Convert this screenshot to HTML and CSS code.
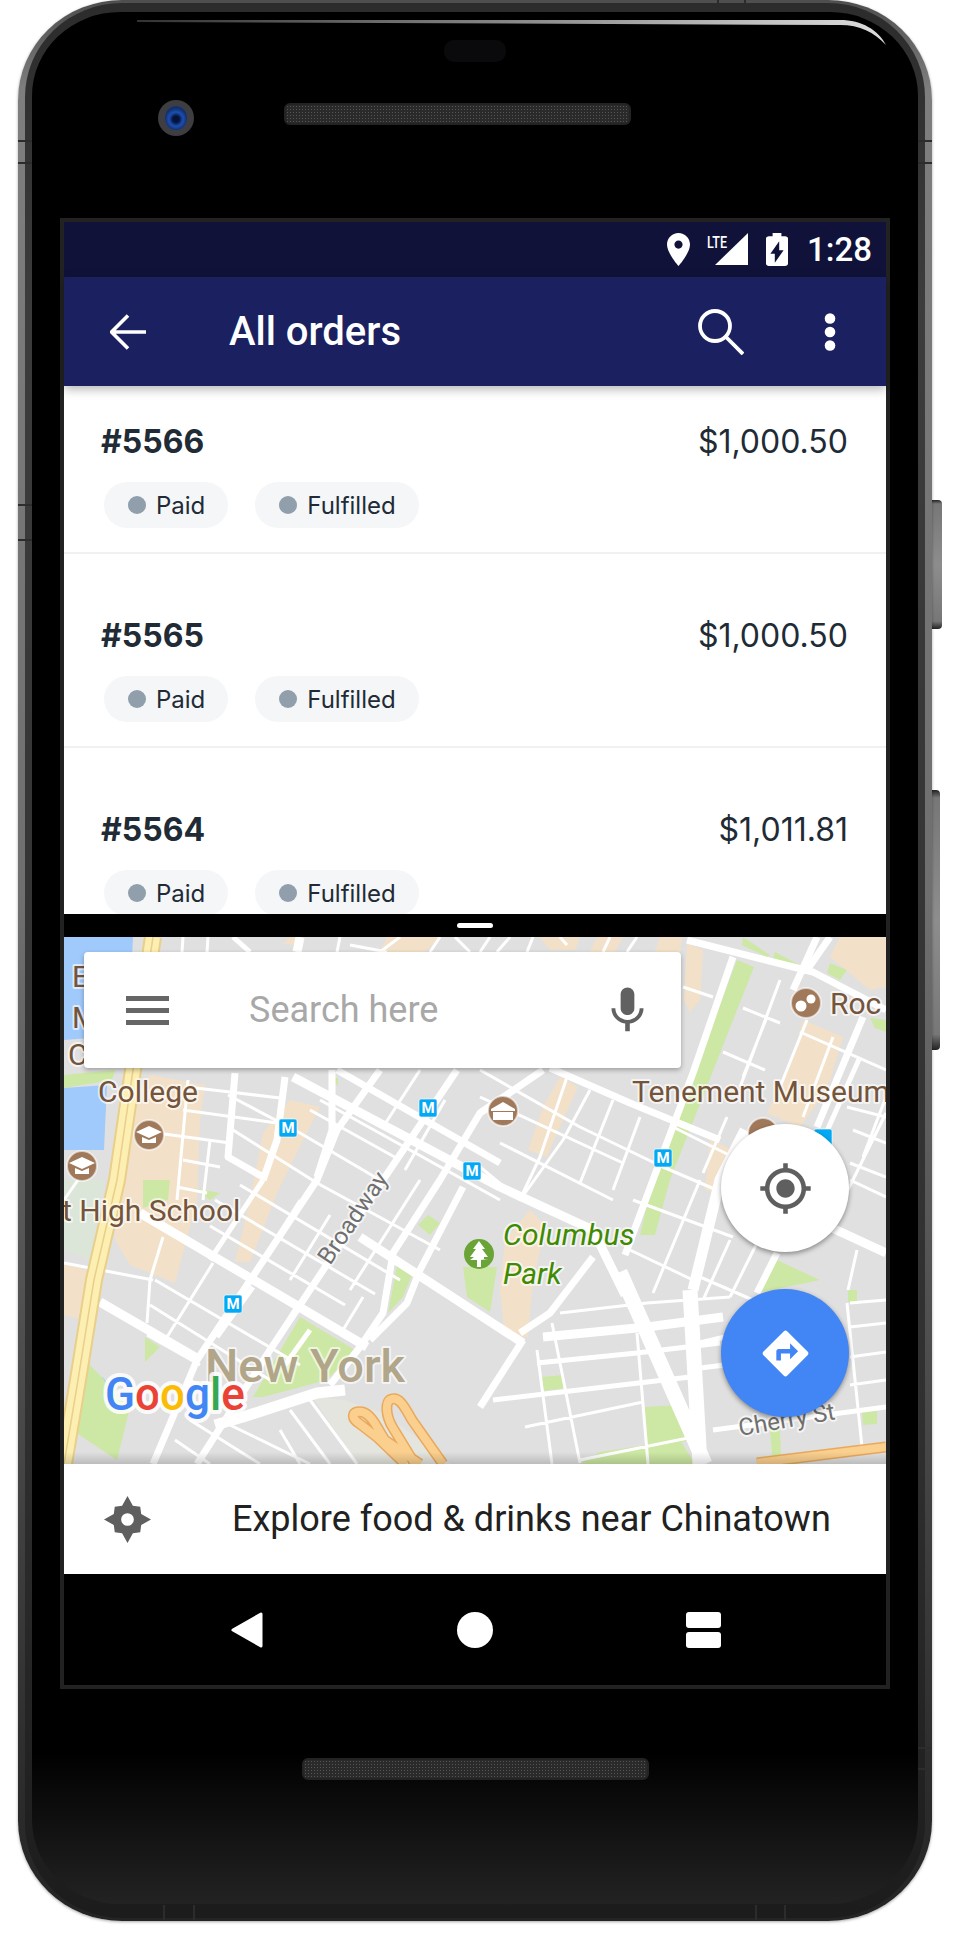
FILE: index.html
```html
<!DOCTYPE html>
<html lang="en">
<head>
<meta charset="utf-8">
<title>All orders</title>
<link rel="stylesheet" href="styles.css">
</head>
<body>
<div class="device">
  <div class="btn btn-power"></div>
  <div class="btn btn-volume"></div>
  <div class="frame">
    <div class="rim">
      <div class="face">
        <div class="earpiece"></div>
        <div class="top-row">
          <div class="camera"><div class="lens"></div></div>
          <div class="speaker"></div>
        </div>
        <div class="screen">
          <div class="status">
            <svg class="st-pin" viewBox="5 2 14 20" preserveAspectRatio="none"><path fill="#fff" d="M12 2C8.13 2 5 5.13 5 9c0 5.25 7 13 7 13s7-7.75 7-13c0-3.87-3.13-7-7-7zm0 9.5c-1.38 0-2.5-1.12-2.5-2.5s1.12-2.5 2.5-2.5 2.5 1.12 2.5 2.5-1.12 2.5-2.5 2.5z"/></svg>
            <svg class="st-signal" viewBox="0 0 41 33"><text class="lte" x="0" y="15" textLength="20" lengthAdjust="spacingAndGlyphs">LTE</text><path fill="#fff" d="M41 0V32H8Z"/></svg>
            <svg class="st-batt" viewBox="7 2 10 20" preserveAspectRatio="none"><path fill="#fff" d="M15.67 4H14V2h-4v2H8.33C7.6 4 7 4.6 7 5.33v15.33C7 21.4 7.6 22 8.33 22h7.33c.74 0 1.34-.6 1.34-1.33V5.33C17 4.6 16.4 4 15.67 4zM11 20v-5.5H9L13 7v5.5h2L11 20z"/></svg>
            <span class="time">1:28</span>
          </div>
          <header class="appbar">
            <svg class="ab-back" viewBox="0 0 36 36"><path d="M36 18H2M18 1.500 1.500 18 18 34.500" fill="none" stroke="#fff" stroke-width="3.600"/></svg>
            <h1 class="title">All orders</h1>
            <svg class="ab-search" viewBox="0 0 46 46"><circle cx="17" cy="17" r="15" fill="none" stroke="#fff" stroke-width="3.800"/><path d="M28 28 45 45" stroke="#fff" stroke-width="3.800"/></svg>
            <svg class="ab-more" viewBox="0 0 12 38"><circle cx="6" cy="5.500" r="5.300" fill="#fff"/><circle cx="6" cy="19" r="5.300" fill="#fff"/><circle cx="6" cy="32.500" r="5.300" fill="#fff"/></svg>
          </header>
          <div class="orders">
            <div class="orders-scroll">
              <div class="order">
                <div class="order-top"><span class="order-id">#5566</span><span class="order-price">$1,000.50</span></div>
                <div class="chips"><span class="chip"><i class="dot"></i>Paid</span><span class="chip"><i class="dot"></i>Fulfilled</span></div>
              </div>
              <div class="order">
                <div class="order-top"><span class="order-id">#5565</span><span class="order-price">$1,000.50</span></div>
                <div class="chips"><span class="chip"><i class="dot"></i>Paid</span><span class="chip"><i class="dot"></i>Fulfilled</span></div>
              </div>
              <div class="order">
                <div class="order-top"><span class="order-id">#5564</span><span class="order-price">$1,011.81</span></div>
                <div class="chips"><span class="chip"><i class="dot"></i>Paid</span><span class="chip"><i class="dot"></i>Fulfilled</span></div>
              </div>
            </div>
          </div>
          <div class="divider"><span class="handle"></span></div>
          <div class="map">
            <svg class="map-art" viewBox="64 937 822 527" width="822" height="527">
              <rect x="64" y="937" width="822" height="527" fill="#e0e0e0"/>
              <g fill="#a0c9fc">
                <path d="M64 937H133L128 1035 64 1040Z"/>
                <path d="M64 1088 107 1085 104 1150H64Z"/>
                <path d="M102 1377 112 1387 102 1397 92 1387Z"/>
                <path d="M105 1417 116 1428 105 1439 94 1428Z"/>
              </g>
              <g fill="#f2e1c8">
                <path d="M150 1075 205 1085 200 1120 197 1200 175 1283 130 1265 115 1240 118 1180 130 1100Z"/>
                <path d="M290 1100 320 1107 303 1140 277 1193 250 1262 235 1262 250 1200 263 1133Z"/>
                <path d="M560 1077 578 1087 557 1133 547 1157 528 1150 543 1107Z"/>
                <path d="M540 937H580L575 950H550Z"/>
                <path d="M597 937H623L615 952H590Z"/>
                <path d="M660 937H682L680 952H655Z"/>
                <path d="M687 943 703 950 700 1000 690 1012 684 1000Z"/>
                <path d="M803 1020 843 1037 827 1090 800 1127 767 1113 790 1067Z"/>
                <path d="M840 937H886V987L870 990 830 957Z"/>
                <path d="M530 1210 545 1225 532 1290 528 1337 505 1335 500 1290 505 1240Z"/>
                <path d="M710 1140 733 1150 720 1193 705 1190Z"/>
                <path d="M387 937H440L425 952H380Z"/>
                <path d="M64 1262 92 1272 85 1320 64 1315Z"/>
                <path d="M290 937H300L298 945 283 944Z"/>
              </g>
              <path fill="#dbe6d8" d="M64 1180H105L90 1260 64 1250Z"/>
              <path fill="#e5e5e0" d="M313 1397 343 1400 383 1413 443 1457 450 1464H357Z"/>
              <g fill="#cde8a4">
                <path d="M64 1075 115 1070 112 1080 64 1088Z"/>
                <path d="M737 960 754 967 670 1180 655 1235 640 1235 653 1180Z"/>
                <path d="M743 937 770 955 767 957 742 945Z"/>
                <path d="M775 952 803 967 802 970 773 958Z"/>
                <path d="M817 971 847 987 843 988 815 975Z"/>
                <path d="M830 963 847 970 840 980 827 973Z"/>
                <path d="M870 1018 886 1020V1032L875 1028Z"/>
                <path d="M300 1317 355 1350 327 1380 263 1397 253 1397Z"/>
                <path d="M397 1265 412 1275 403 1297 388 1313Z"/>
                <path d="M428 1215 440 1223 430 1235 418 1225Z"/>
                <path d="M463 1267H497L490 1312 467 1297Z"/>
                <path d="M193 1188 220 1193 210 1200Z"/>
                <path d="M143 1180H170L168 1200 143 1208Z"/>
                <path d="M145 1337 160 1347 145 1362Z"/>
                <path d="M87 1362 130 1407 117 1460 72 1430Z"/>
                <path d="M645 1407 680 1405 695 1440 645 1447Z"/>
                <path d="M580 1464H695L680 1440 600 1452Z"/>
                <path d="M542 1377 563 1375 566 1388 543 1391Z"/>
                <path d="M770 1430H780L781 1456H772Z"/>
                <path d="M862 1410 877 1408 877 1424 863 1425Z"/>
                <path d="M848 1290 857 1290 857 1302 848 1302Z"/>
                <path d="M767 1280 777 1260 820 1280 757 1293Z"/>
                <path d="M330 1078 338 1078 338 1086Z"/>
              </g>
              <g fill="none" stroke="#fff" stroke-linejoin="round">
                <path stroke-width="3" d="M183 937 182 952M208 937 207 952M340 937 337 952M350 945 387 952M400 937 380 952M440 937 430 952M455 937 470 952M490 937 480 952M510 937 497 952M533 937 527 952M560 937 567 945M610 937 603 952M637 937 627 952M187 1087 230 1092 280 1098M183 1110 277 1123M157 1133 230 1143M183 1160 220 1167M177 1187 207 1193M188 1080 177 1200 M210 1140 203 1200M233 1130 317 1183 440 1250M228 1095 300 1133 380 1180M310 1110 400 1160M340 1100 430 1150M210 1226 345 1305M215 1200 375 1294M240 1185 400 1280M64 1263 153 1280M155 1280 300 1365M150 1305 270 1380M147 1335 200 1365M190 1380 240 1410M230 1425 310 1464M190 1420 260 1464M175 1440 210 1464M310 1400 357 1464M290 1410 330 1464M280 1430 300 1464M330 1215 290 1280M300 1200 250 1280M163 1237 150 1280 147 1323M213 1263 167 1337M420 1180 350 1290M363 1297 343 1330M480 1070 580 1127 663 1167 740 1200M480 1097 623 1163M500 1143 613 1200M480 1167 520 1200M320 1100 500 1200M590 1090 563 1140 520 1200M613 1100 580 1183M640 1117 613 1190M567 1077 540 1157 523 1193M420 1070 383 1127M445 1100 405 1170M683 987 713 997M743 1008 780 1023M723 1052 765 1070M800 1032 886 1070M673 1127 733 1157M780 980 753 1053 740 1087M767 1017 743 1077M833 1037 803 1117M807 1020 780 1087M886 1097 863 1157M886 1113 843 1200M727 1117 703 1173M847 1107 886 1117M853 1130 886 1143M850 1163 886 1177M850 1180 886 1197M633 1200 733 1237M700 1277 753 1300M630 1250 693 1280M730 1240 703 1300M757 1243 730 1297M700 1180 653 1293M552 1323 580 1463M537 1350 552 1464M637 1333 648 1464M560 1313 647 1303 730 1297M525 1427 643 1402M580 1460 693 1437M850 1303 886 1300M850 1327 886 1323M850 1357 886 1352M850 1385 886 1380M847 1303 862 1447M857 1250 848 1290M64 1200 78 1180"/>
                <path stroke-width="5" d="M860 1057 823 1140M493 1400 690 1377M713 1430 886 1407M700 1343 725 1337M700 1368 725 1365M233 937 250 952M263 1180 210 1260M253 1287 217 1337M297 1307 270 1350M537 1363 637 1353 720 1343M310 1330 285 1365"/>
                <path stroke-width="7" d="M235 1073 228 1157 263 1177M285 1077 277 1140 263 1180M332 1070 332 1130 317 1177M380 1070 337 1130 317 1180 197 1360 153 1464M457 1070 383 1180 270 1350 197 1464M543 1070 480 1113 440 1180 393 1253 383 1313 360 1347 330 1385M463 1187 420 1270 407 1303 370 1340M337 1070 500 1163M550 1068 630 1103 720 1140M687 940 813 972 886 1010M817 937 793 990M830 937 807 970M863 1017 817 1127M733 957 693 1073 653 1180 625 1255M777 1253 757 1293M593 1257 550 1313 520 1333M523 1340 480 1407"/>
                <path stroke-width="9" d="M293 1077 500 1187 593 1230 625 1295M360 1237 523 1343M100 1302 200 1360M830 1227 886 1253M543 1337 647 1327 723 1317M140 1213 367 1347M300 937 297 952"/>
                <path stroke-width="11" d="M215 1425 243 1417 317 1393 345 1390M745 1130 720 1180 693 1290"/>
                <path stroke-width="15" d="M620 1272 705 1464M690 1290 700 1464"/>
              </g>
              <g fill="none">
                <path stroke="#e8cf8a" stroke-width="18" d="M153 937 133 1070 117 1180 94 1280 78 1380 64 1464"/>
                <path stroke="#fdeeb2" stroke-width="14" d="M153 937 133 1070 117 1180 94 1280 78 1380 64 1464"/>
                <path stroke="#e8cf8a" stroke-width="1.500" d="M153 937 133 1070 117 1180 94 1280 78 1380 64 1464"/>
                <path stroke="#e8a95c" stroke-width="11" d="M405 1464 378 1438 360 1424C350 1418 352 1410 362 1412 372 1414 378 1430 385 1440L420 1464M415 1464 393 1428C385 1415 385 1400 392 1399 400 1397 405 1408 412 1420L443 1464M757 1463 886 1447"/>
                <path stroke="#fbd08f" stroke-width="8" d="M405 1464 378 1438 360 1424C350 1418 352 1410 362 1412 372 1414 378 1430 385 1440L420 1464M415 1464 393 1428C385 1415 385 1400 392 1399 400 1397 405 1408 412 1420L443 1464M757 1463 886 1447"/>
              </g>
              <g class="poi-brown">
                <circle cx="149" cy="1135" r="15"/><circle cx="82" cy="1166" r="15"/><circle cx="503" cy="1111" r="15"/><circle cx="806" cy="1003" r="15"/><circle cx="763" cy="1133" r="15"/>
              </g>
              <g fill="#fff">
                <path d="M136 1132 149 1126 162 1132 149 1138ZM142 1137 149 1140 156 1137V1143H142Z"/>
                <path d="M69 1163 82 1157 95 1163 82 1169ZM75 1168 82 1171 89 1168V1174H75Z"/>
                <path d="M491 1109 503 1102 515 1109V1111H491ZM493 1112H513V1120H493Z"/>
                <circle cx="801" cy="1006" r="5.500"/><circle cx="811" cy="999" r="4.500"/>
              </g>
              <circle cx="479" cy="1254" r="15" fill="#6aa436"/>
              <path fill="#fff" d="M479 1241 485 1249H482L488 1257H484V1259H488L481 1260V1267H477V1260H470L474 1257H470L476 1249H473Z"/>
              <g class="metro">
                <rect x="279" y="1119" width="18" height="18" rx="2"/><rect x="419" y="1099" width="18" height="18" rx="2"/><rect x="463" y="1162" width="18" height="18" rx="2"/><rect x="654" y="1149" width="18" height="18" rx="2"/><rect x="224" y="1295" width="18" height="18" rx="2"/><rect x="814" y="1129" width="18" height="18" rx="2"/>
              </g>
              <g class="metro-label">
                <text x="288" y="1133">M</text><text x="428" y="1113">M</text><text x="472" y="1176">M</text><text x="663" y="1163">M</text><text x="233" y="1309">M</text>
              </g>
              <g class="lbl-brown">
                <text x="72" y="987">E</text><text x="72" y="1028">M</text><text x="68" y="1065">C</text>
                <text x="98" y="1102">College</text>
                <text x="62" y="1221">t High School</text>
                <text x="632" y="1102">Tenement Museum</text>
                <text x="830" y="1014">Roc</text>
              </g>
              <g class="lbl-green">
                <text x="503" y="1245">Columbus</text>
                <text x="503" y="1284">Park</text>
              </g>
              <text class="lbl-city" x="205" y="1382">New York</text>
              <g class="lbl-street">
                <text transform="translate(330 1266) rotate(-56)">Broadway</text>
                <text transform="translate(740 1436) rotate(-10)">Cherry St</text>
              </g>
              <text class="google" x="105" y="1410" textLength="140" lengthAdjust="spacingAndGlyphs"><tspan fill="#4285f4">G</tspan><tspan fill="#ea4335">o</tspan><tspan fill="#fbbc05">o</tspan><tspan fill="#4285f4">g</tspan><tspan fill="#34a853">l</tspan><tspan fill="#ea4335">e</tspan></text>
            </svg>
            <div class="map-fade"></div>
            <div class="searchbar">
              <svg class="sb-menu" viewBox="0 0 43 29"><path fill="#666" d="M0 0H43V5H0ZM0 12H43V17H0ZM0 24H43V29H0Z"/></svg>
              <span class="sb-text">Search here</span>
              <svg class="sb-mic" viewBox="0 0 24 24"><path fill="#616161" d="M12 14c1.66 0 2.99-1.34 2.99-3L15 5c0-1.660-1.340-3-3-3S9 3.340 9 5v6c0 1.660 1.340 3 3 3zm5.300-3c0 3-2.540 5.100-5.300 5.100S6.700 14 6.700 11H5c0 3.410 2.720 6.230 6 6.720V21h2v-3.280c3.280-.48 6-3.300 6-6.720h-1.700z"/></svg>
            </div>
            <div class="fab fab-locate">
              <svg class="fab-icon" viewBox="0 0 24 24"><path fill="#5f5f5f" d="M12 8c-2.210 0-4 1.790-4 4s1.790 4 4 4 4-1.790 4-4-1.790-4-4-4zm8.940 3c-.46-4.170-3.770-7.480-7.940-7.940V1h-2v2.060C6.830 3.520 3.520 6.830 3.060 11H1v2h2.060c.46 4.170 3.770 7.480 7.940 7.940V23h2v-2.060c4.170-.46 7.480-3.770 7.940-7.940H23v-2h-2.060zM12 19c-3.870 0-7-3.130-7-7s3.130-7 7-7 7 3.130 7 7-3.130 7-7 7z"/></svg>
            </div>
            <div class="fab fab-directions">
              <svg class="fab-icon" viewBox="0 0 24 24"><path fill="#fff" d="M21.710 11.290l-9-9c-.39-.39-1.020-.39-1.410 0l-9 9c-.39.39-.39 1.020 0 1.410l9 9c.39.39 1.020.39 1.410 0l9-9c.39-.38.39-1.010 0-1.410zM14 14.500V12h-4v3H8v-4c0-.55.45-1 1-1h5V7.500l3.500 3.500-3.500 3.500z"/></svg>
            </div>
          </div>
          <div class="sheet">
            <svg class="sh-icon" viewBox="0 0 48 48"><path fill="#5f5f5f" fill-rule="evenodd" d="M24 0 29.500 10 37 11 38 18.500 48 24 38 29.500 37 37 29.500 38 24 48 18.500 38 11 37 10 29.500 0 24 10 18.500 11 11 18.500 10ZM24 17.500A6.500 6.500 0 1 0 24 30.500 6.500 6.500 0 1 0 24 17.500Z"/></svg>
            <span class="sh-text">Explore food &amp; drinks near Chinatown</span>
          </div>
          <nav class="navbar">
            <svg class="nv-back" viewBox="0 0 32 36"><path fill="#fff" stroke="#fff" stroke-width="3" stroke-linejoin="round" d="M30 2V34L2 18Z"/></svg>
            <span class="nv-home"></span>
            <span class="nv-recent"><i></i><i></i></span>
          </nav>
        </div>
        <div class="speaker speaker-bottom"></div>
      </div>
    </div>
  </div>
  <svg class="decor" viewBox="0 0 958 1936" width="958" height="1936">
    <defs>
      <linearGradient id="glint" x1="0" x2="1" y1="0" y2="0">
        <stop offset="0" stop-color="#333"/><stop offset=".6" stop-color="#999"/><stop offset="1" stop-color="#ddd"/>
      </linearGradient>
    </defs>
    <path fill="url(#glint)" d="M137 20H840C862 20 878 30 886 45 874 32 860 25 840 25L137 22Z"/>
    <g stroke="#2c2c2c" stroke-width="2">
      <path d="M918 141H932M918 163H932M18 141H32M18 163H32M718 0V10M745 0V10M164 1905V1920M194 1905V1920M756 1905V1920M785 1905V1920M918 1748H932M918 1769H932M18 505H32M18 540H32"/>
    </g>
  </svg>
</div>
</body>
</html>
```

FILE: styles.css
```css
* { box-sizing: border-box; }
html, body { margin: 0; padding: 0; background: #fff; }
body { font-family: Roboto, "Liberation Sans", sans-serif; height: 1936px; overflow: hidden; }

.device { position: relative; width: 914px; height: 1921px; margin-left: 18px; }
.btn { position: absolute; border-radius: 0 4px 4px 0; background: linear-gradient(to bottom, #222 0, #777 3%, #8d8d8d 50%, #777 94%, #222 100%); }
.btn-power { left: 914px; top: 500px; width: 10px; height: 129px; }
.btn-volume { left: 914px; top: 790px; width: 8px; height: 260px; }

.frame { position: relative; height: 100%; padding: 3px 7px 3px 7px; border-radius: 104px / 100px;
  background: linear-gradient(to bottom, #4e4e4e 0, #7e7e7e 90px, #6f6f6f 900px, #4a4a4a 1400px, #2e2e2e 1750px, #242424 100%);
  box-shadow: 0 1px 3px rgba(0,0,0,.35); }
.rim { height: 100%; padding: 9px 7px 14px 7px; border-radius: 97px / 94px;
  background: linear-gradient(to bottom, #2c2c2c 0, #3c3c3c 300px, #303030 1400px, #1c1c1c 100%); }
.face { position: relative; height: 100%; display: flex; flex-direction: column; align-items: center; border-radius: 88px / 84px;
  background: linear-gradient(to bottom, #000 0, #000 1740px, #101010 1810px, #222 1890px); }

.earpiece { position: absolute; top: 28px; left: 412px; width: 62px; height: 22px; border-radius: 10px; background: #0a0a0d; }
.top-row { position: relative; width: 100%; height: 206px; padding-top: 88px; display: flex; }
.camera { width: 36px; height: 36px; margin-left: 126px; border-radius: 50%; background: #3e3e42; display: flex; align-items: center; justify-content: center; }
.lens { width: 22px; height: 24px; border-radius: 50%; background: radial-gradient(circle at 50% 55%, #05123a 0 3px, #1c4fb0 7px, #123070 11px); }
.speaker { width: 347px; height: 22px; margin-left: 90px; border-radius: 6px; border: 2px solid #232323;
  background: #2a2a2a radial-gradient(#555 0.7px, transparent 0.9px) 0 0 / 3px 3px; }
.top-row .speaker { margin-top: 3px; }
.speaker-bottom { margin: 69px 0 0 0; }

.screen { width: 830px; height: 1471px; border: 4px solid #222; background: #000; display: flex; flex-direction: column; flex: none; }

.status { height: 55px; background: #101239; display: flex; align-items: center; justify-content: flex-end; padding-right: 19px; }
.st-pin { width: 23px; height: 33px; margin-right: 17px; }
.st-signal { width: 41px; height: 33px; margin-right: 18px; }
.st-batt { width: 22px; height: 33px; margin-right: 19px; }
.lte { font-family: Roboto, sans-serif; font-weight: 500; font-size: 17px; fill: #fff; }
.time { color: #fff; font-size: 33px; font-weight: 500; width: 60px; text-align: right; line-height: 33px; }

.appbar { height: 109px; background: #1b2160; display: flex; align-items: center; padding-left: 46px; position: relative; z-index: 2; box-shadow: 0 3px 10px rgba(0,0,0,.3); }
.ab-back { width: 36px; height: 36px; margin-right: 83px; }
.title { margin: 0; color: #fff; font-size: 40px; font-weight: 500; flex: 1; line-height: 48px; }
.ab-search { width: 46px; height: 46px; margin-right: 80px; }
.ab-more { width: 12px; height: 38px; margin-right: 50px; }

.orders { height: 528px; overflow: hidden; background: #fff; }
.orders-scroll { margin-top: -26px; }
.order { height: 194px; padding: 60px 38px 24px 37px; border-bottom: 2px solid #f0f1f3; }
.order-top { display: flex; justify-content: space-between; align-items: center; height: 42px; color: #212b36; }
.order-id { font-family: Inter, sans-serif; font-weight: 700; font-size: 32px; }
.order-price { font-family: Inter, sans-serif; font-size: 32px; }
.chips { display: flex; gap: 27px; margin: 20px 0 0 3px; }
.chip { height: 46px; border-radius: 23px; background: #f4f6f8; display: flex; align-items: center; padding: 0 23px 0 24px; color: #212b36; font-family: Inter, sans-serif; font-size: 24px; }
.dot { width: 18px; height: 18px; border-radius: 50%; background: #919eab; margin-right: 10px; }

.divider { height: 23px; background: #000; display: flex; align-items: center; justify-content: center; }
.handle { width: 36px; height: 5px; border-radius: 3px; background: #fff; }

.map { position: relative; height: 527px; overflow: hidden; background: #e0e0e0; }
.map-art { display: block; }
.map-fade { position: absolute; left: 0; right: 0; bottom: 0; height: 12px; background: linear-gradient(to bottom, rgba(0,0,0,0), rgba(0,0,0,.16)); }

.poi-brown { fill: #a0795b; stroke: #fff; stroke-opacity: .6; stroke-width: 2; }
.metro { fill: #03a9f4; stroke: #fff; stroke-opacity: .6; }
.metro-label { font-family: Roboto, sans-serif; font-weight: 700; font-size: 15px; fill: #fff; text-anchor: middle; }
.lbl-brown, .lbl-green, .lbl-city, .lbl-street, .google { paint-order: stroke; stroke: #fff; stroke-opacity: .65; stroke-width: 4px; stroke-linejoin: round; }
.lbl-brown { font-family: Roboto, sans-serif; font-size: 30px; fill: #74543a; }
.lbl-green { font-family: Roboto, sans-serif; font-style: italic; font-size: 30px; fill: #3f8a00; }
.lbl-city { font-family: Roboto, sans-serif; font-weight: 500; font-size: 47px; fill: #b1a58a; }
.lbl-street { font-family: Roboto, sans-serif; font-size: 24px; fill: #707070; }
.google { font-family: Roboto, sans-serif; font-weight: 500; font-size: 47px; stroke-width: 8px; stroke-opacity: .85; }

.searchbar { position: absolute; left: 20px; top: 15px; width: 597px; height: 116px; background: #fff; border-radius: 4px; box-shadow: 0 2px 5px rgba(0,0,0,.3); display: flex; align-items: center; padding-left: 42px; }
.sb-menu { width: 43px; height: 29px; margin-right: 80px; flex: none; }
.sb-text { color: #a8a8a8; font-size: 36px; flex: 1; }
.sb-mic { width: 55px; height: 55px; margin-right: 26px; flex: none; }

.fab { position: absolute; left: 657px; width: 128px; height: 128px; border-radius: 50%; display: flex; align-items: center; justify-content: center; box-shadow: 0 2px 5px rgba(0,0,0,.4); }
.fab-locate { top: 187px; background: #fff; }
.fab-directions { top: 352px; background: #4285f4; }
.fab-icon { width: 55px; height: 55px; }

.sheet { height: 110px; background: #fff; display: flex; align-items: center; padding-left: 40px; }
.sh-icon { width: 47px; height: 47px; margin-right: 81px; flex: none; }
.sh-text { font-size: 36px; color: #212121; white-space: nowrap; }

.navbar { height: 111px; background: #000; display: flex; align-items: center; padding-left: 167px; }
.nv-back { width: 32px; height: 36px; margin-right: 194px; }
.nv-home { width: 36px; height: 36px; border-radius: 50%; background: #fff; margin-right: 193px; }
.nv-recent { width: 35px; height: 36px; display: flex; flex-direction: column; justify-content: space-between; }
.nv-recent i { display: block; height: 16px; border-radius: 3px; background: #fff; }

.decor { position: absolute; left: -18px; top: 0; pointer-events: none; }
```
